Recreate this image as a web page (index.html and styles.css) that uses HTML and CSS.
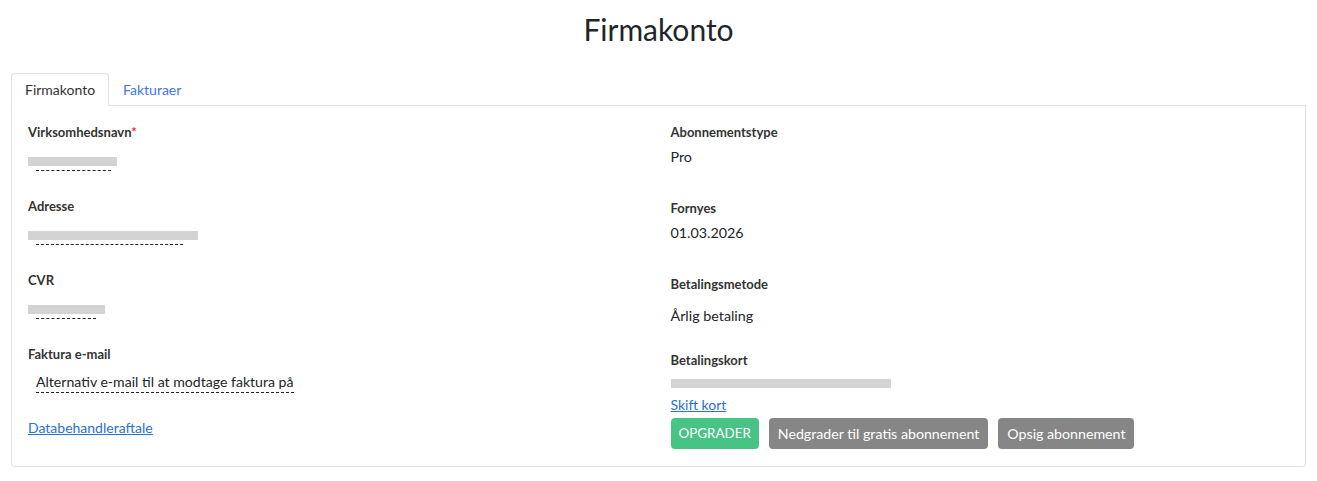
FILE: index.html
```html
<!DOCTYPE html>
<html lang="da">
<head>
<meta charset="utf-8">
<title>Firmakonto</title>
<link rel="stylesheet" href="styles.css">
</head>
<body>
<div class="page">
  <h1 class="title">Firmakonto</h1>
  <nav class="tabs">
    <a class="tab active">Firmakonto</a>
    <a class="tab">Fakturaer</a>
  </nav>
  <div class="card">
    <div class="col">
      <div class="field">
        <div class="label">Virksomhedsnavn<span class="req">*</span></div>
        <div class="value"><span class="editable redacted" style="width:75px"></span><span class="blur" style="width:89px"></span></div>
      </div>
      <div class="field">
        <div class="label">Adresse</div>
        <div class="value"><span class="editable redacted" style="width:147px"></span><span class="blur" style="width:170px"></span></div>
      </div>
      <div class="field">
        <div class="label">CVR</div>
        <div class="value"><span class="editable redacted" style="width:60px"></span><span class="blur" style="width:77px"></span></div>
      </div>
      <div class="field">
        <div class="label">Faktura e-mail</div>
        <div class="value"><span class="editable">Alternativ e-mail til at modtage faktura på</span></div>
      </div>
      <a class="link" href="#">Databehandleraftale</a>
    </div>
    <div class="col">
      <div class="label">Abonnementstype</div>
      <div class="info">Pro</div>
      <div class="label">Fornyes</div>
      <div class="info">01.03.2026</div>
      <div class="label">Betalingsmetode</div>
      <div class="info info-wide">Årlig betaling</div>
      <div class="label">Betalingskort</div>
      <div class="cardno"><span class="blur" style="width:220px"></span></div>
      <a class="link" href="#">Skift kort</a>
      <div class="buttons">
        <button class="btn btn-green">OPGRADER</button>
        <button class="btn btn-gray">Nedgrader til gratis abonnement</button>
        <button class="btn btn-gray">Opsig abonnement</button>
      </div>
    </div>
  </div>
</div>
</body>
</html>
```

FILE: styles.css
```css
* { box-sizing: border-box; }
body {
  margin: 0;
  background: #fff;
  color: #212529;
  font-family: "Lato", "Noto Sans", sans-serif;
}
.page {
  padding: 0 11px;
}
.title {
  margin: 0;
  padding-top: 10px;
  height: 73px;
  text-align: center;
  font-size: 30px;
  font-weight: 400;
  line-height: 38px;
  color: #212529;
}
.tabs {
  display: flex;
  border-bottom: 1px solid #dee2e6;
  height: 33px;
}
.tab {
  display: block;
  height: 33px;
  padding: 0 13px;
  line-height: 32px;
  font-size: 14px;
  color: #3f73f3;
  border: 1px solid transparent;
  border-radius: 4px 4px 0 0;
  text-decoration: none;
}
.tab.active {
  color: #333;
  border-color: #dee2e6 #dee2e6 #fff;
  background: #fff;
}
.card {
  display: grid;
  grid-template-columns: 1fr 1fr;
  column-gap: 24px;
  border: 1px solid #dee2e6;
  border-top: 0;
  border-radius: 0 0 4px 4px;
  padding: 16px 16px 17px 16px;
}
.col {
  display: flex;
  flex-direction: column;
  align-items: flex-start;
}
.label {
  font-size: 13px;
  font-weight: 700;
  line-height: 20px;
  color: #333;
}
.req { color: #e3342f; }
.field {
  height: 74px;
}
.value {
  position: relative;
  margin-top: 7px;
  height: 23px;
  font-size: 14.1px;
  line-height: 22px;
}
.editable {
  display: inline-block;
  margin-left: 8px;
  height: 22px;
  border-bottom: 1px dashed #222;
  vertical-align: top;
  color: #212529;
}
.redacted { height: 22px; }
.blur {
  position: absolute;
  left: 0;
  top: 8px;
  height: 9px;
  background: #d3d3d3;
}
.link {
  font-size: 14px;
  line-height: 20px;
  color: #2a6fd3;
  text-decoration: underline;
}
.info {
  margin-top: 4px;
  margin-bottom: 30px;
  font-size: 14.3px;
  line-height: 22px;
}
.info-wide {
  margin-top: 11px;
  margin-bottom: 23px;
}
.cardno {
  position: relative;
  height: 21px;
  margin-top: 4px;
  width: 100%;
}
.cardno .blur { top: 5px; }
.buttons {
  display: flex;
  gap: 10px;
  margin-top: 3px;
}
.btn {
  height: 31px;
  padding: 0 9px;
  border: 0;
  border-radius: 4px;
  font-family: inherit;
  font-size: 14.2px;
  line-height: 31px;
  color: #fff;
  cursor: pointer;
}
.btn-green { background: #48c386; font-size: 13.4px; padding: 0 8px; }
.btn-gray { background: #868686; }
```
